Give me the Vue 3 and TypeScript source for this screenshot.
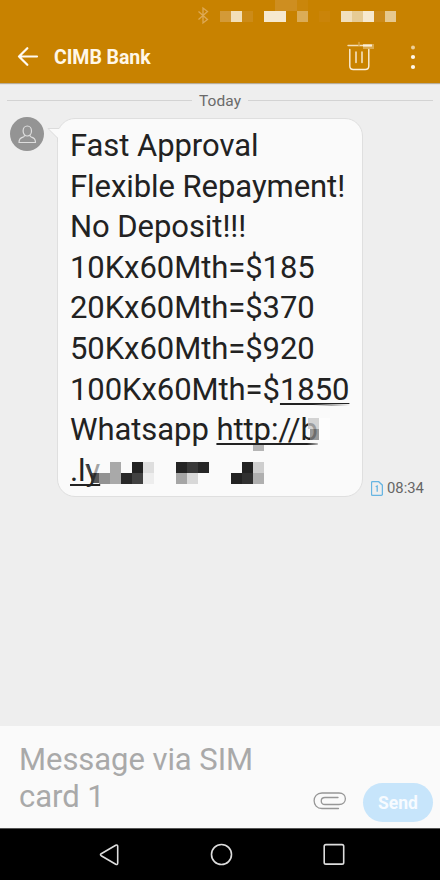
<script setup lang="ts">
interface Cell {
  x: number
  y: number
  w: number
  h: number
  c: string
}

const cell = (x: number, y: number, c: string, w = 11, h = 11): Cell => ({ x, y, w, h, c })

const statusCells: Cell[] = [
  cell(275, 0, '#ce8e20', 22),
  cell(297, 0, '#ca860b'),
  cell(220, 11, '#d39a38'),
  cell(231, 11, '#f2dfb9'),
  cell(242, 11, '#cc8b18'),
  cell(264, 11, '#f6e9d0', 22),
  cell(297, 11, '#dbac57'),
  cell(319, 11, '#ca8409'),
  cell(341, 11, '#f1dfbc'),
  cell(352, 11, '#e6cb94'),
  cell(363, 11, '#f6e9d0'),
  cell(374, 11, '#cc8a19'),
  cell(385, 11, '#e6c88e'),
]

// Coordinates are relative to the bubble's top left corner.
const bubbleCells: Cell[] = [
  cell(195, 326, '#b5b5b5', 11, 6),
  cell(41, 354, '#929292'),
  cell(52, 343, '#a9a9a9', 11, 22),
  cell(63, 354, '#282828'),
  cell(74, 343, '#222222'),
  cell(74, 354, '#414141'),
  cell(85, 343, '#dedede'),
  cell(85, 354, '#ededed'),
  cell(118, 343, '#242424'),
  cell(129, 343, '#393939'),
  cell(140, 343, '#272727'),
  cell(118, 354, '#a5a5a5'),
  cell(129, 354, '#d8d8d8'),
  cell(173, 354, '#222222'),
  cell(184, 343, '#222222'),
  cell(184, 354, '#303030'),
  cell(195, 343, '#cecece'),
  cell(195, 354, '#afafaf'),
]

const lines: string[] = [
  'Fast Approval',
  'Flexible Repayment!',
  'No Deposit!!!',
  '10Kx60Mth=$185',
  '20Kx60Mth=$370',
  '50Kx60Mth=$920',
]
</script>

<template>
  <div class="screen">
    <header class="top">
      <svg class="status" width="440" height="30" viewBox="0 0 440 30">
        <path d="M198.500 11.500l9 8-4.500 3.500V8l4.500 3.500-9 8" fill="none" stroke="#dda954" stroke-width="1.300" />
        <rect v-for="(b, i) in statusCells" :key="i" :x="b.x" :y="b.y" :width="b.w" :height="b.h" :fill="b.c" shape-rendering="crispEdges" />
      </svg>
      <div class="bar">
        <svg class="back" width="22" height="20" viewBox="0 0 22 20" fill="none" stroke="#fffaf0" stroke-width="2.200" stroke-linecap="round" stroke-linejoin="round">
          <path d="M20 9.500H2M10.300 1.200L2 9.500l8.300 8.300" />
        </svg>
        <h1>CIMB Bank</h1>
        <svg class="trash" width="30" height="32" viewBox="0 0 30 32" fill="none" stroke="#fbf0dc" stroke-width="1.400" stroke-linecap="round">
          <rect x="17" y="3" width="11" height="5" fill="#dba94e" stroke="none" />
          <path d="M2 4.500h23" stroke="#f4dfb8" />
          <path d="M17 4.500h9" stroke-width="2" stroke-linecap="butt" />
          <path d="M13 1.500v3" stroke="#dba94e" />
          <path d="M3.800 8.500v16.500q0 3.500 3.500 3.500h12q3.500 0 3.500-3.500V8.500M10 11v10.500M16 11v10.500" />
        </svg>
        <svg class="dots" width="8" height="28" viewBox="0 0 8 28" fill="#fff8ea">
          <circle cx="4" cy="4.500" r="2" fill="#edcf98" />
          <circle cx="4" cy="14" r="2.100" />
          <circle cx="4" cy="24" r="2.100" />
        </svg>
      </div>
    </header>

    <main class="thread">
      <div class="day"><span>Today</span></div>
      <div class="row">
        <svg class="avatar" width="34" height="34" viewBox="0 0 34 34">
          <circle cx="17" cy="17" r="17" fill="#949494" />
          <g fill="none" stroke="#dedede" stroke-width="1.200">
            <ellipse cx="17.300" cy="14" rx="4.200" ry="5" />
            <path d="M14.500 18.200q0 1.500-1.500 2-4 1-4 5.300h16.500q0-4.300-4-5.300-1.500-.500-1.500-2" stroke-linejoin="round" />
          </g>
        </svg>
        <div class="bubble">
          <svg class="tail" width="16" height="14" viewBox="0 0 16 14">
            <path d="M16 .500H1L11 10v4h5z" fill="#fafafa" />
            <path d="M12 .500H1L10.500 10v4" fill="none" stroke="#dcdcdc" />
          </svg>
          <p v-for="line in lines" :key="line">{{ line }}</p>
          <p>100Kx60Mth=$<span class="link">1850</span></p>
          <p>Whatsapp <span class="link">http://b</span></p>
          <p><span class="link">.ly</span></p>
          <svg class="mosaic" width="304" height="378" viewBox="0 0 304 378">
            <defs>
              <linearGradient id="smear" x1="0" x2="1">
                <stop offset="0" stop-color="#a8a8a8" stop-opacity="0" />
                <stop offset=".5" stop-color="#a8a8a8" />
                <stop offset="1" stop-color="#fafafa" />
              </linearGradient>
              <linearGradient id="fade" x1="0" x2="1">
                <stop offset="0" stop-color="#fafafa" stop-opacity="0" />
                <stop offset="1" stop-color="#fafafa" />
              </linearGradient>
            </defs>
            <rect x="250" y="299" width="11" height="11" fill="#c6c6c6" opacity=".75" />
            <rect x="252" y="310" width="9" height="11" fill="#818181" opacity=".8" />
            <rect x="249" y="322" width="16" height="4" fill="url(#fade)" />
            <rect x="261" y="299" width="11" height="22" fill="#fdfdfd" />
            <rect x="255" y="285" width="37" height="2" fill="url(#smear)" />
            <path d="M29 340h13v14h-6z" fill="#fafafa" opacity=".6" />
            <path d="M27 345l4 1 3 10-3-2z" fill="#555555" opacity=".6" />
            <path d="M34 354h7v10h-8z" fill="#303030" opacity=".8" />
            <rect v-for="(b, i) in bubbleCells" :key="i" :x="b.x" :y="b.y" :width="b.w" :height="b.h" :fill="b.c" shape-rendering="crispEdges" />
          </svg>
        </div>
        <div class="stamp">
          <svg width="12" height="15" viewBox="0 0 12 15" fill="none" stroke="#67b5e2" stroke-width="1.300">
            <path d="M1.500.700h6.200l3.700 3.500v9.100q0 1-1 1h-8.900q-1 0-1-1V1.700q0-1 1-1z" />
            <path d="M4.700 5.800l1.500-.800v5.700" />
          </svg>
          <time>08:34</time>
        </div>
      </div>
    </main>

    <footer class="compose">
      <div class="hint">Message via SIM card 1</div>
      <svg class="clip" width="34" height="18" viewBox="0 0 34 18" fill="none" stroke="#979797" stroke-width="1.300" stroke-linecap="round">
        <path d="M25.500 16.500H9C-1.500 16.500-1.500 1 9 1h17c8.500 0 8.500 11.500 0 11.500H12c-5 0-5-7 0-7h13" />
      </svg>
      <button class="send" type="button">Send</button>
    </footer>

    <nav class="keys">
      <svg width="440" height="51" viewBox="0 0 440 51" fill="none" stroke="#dddddd" stroke-width="1.600" stroke-linejoin="round">
        <path d="M115.700 16.300q2-1 2 1.200v16.500q0 2.200-2 1.200L101.200 26.700q-1.400-1 0-2z" />
        <circle cx="221.500" cy="25.500" r="10" />
        <rect x="324.200" y="15.600" width="19.500" height="19.500" rx="1.700" />
      </svg>
    </nav>
  </div>
</template>

<style>
body {
  margin: 0;
}
</style>

<style scoped>
.screen {
  width: 440px;
  height: 880px;
  display: flex;
  flex-direction: column;
  overflow: hidden;
  background: #eeeeee;
  font-family: Roboto, "Liberation Sans", sans-serif;
}
.top {
  height: 83px;
  background: #c88200;
  box-shadow: 0 1px 1px #b9ad98;
  flex: none;
}
.status {
  display: block;
}
.bar {
  height: 53px;
  display: flex;
  align-items: center;
  padding-left: 17px;
}
.bar h1 {
  margin: 2px 0 0 15px;
  width: 292px;
  font-size: 19.5px;
  letter-spacing: -0.05px;
  line-height: 24px;
  font-weight: 700;
  color: #fff7e8;
}
.dots {
  margin-left: 33px;
}
.thread {
  flex: 1;
}
.day {
  display: flex;
  align-items: center;
  gap: 7px;
  height: 35px;
  padding: 0 7px;
  font-size: 15.5px;
  letter-spacing: 0.1px;
  color: #6a6a6a;
}
.day::before,
.day::after {
  content: "";
  flex: 1;
  height: 1px;
  background: #d3d3d3;
}
.row {
  display: flex;
  align-items: flex-start;
  padding-left: 10px;
}
.avatar {
  margin-top: -1px;
}
.bubble {
  position: relative;
  box-sizing: border-box;
  width: 306px;
  height: 379px;
  margin-left: 13px;
  padding: 7px 0 0 12px;
  background: #fafafa;
  border: 1px solid #dfdfdf;
  border-radius: 18px;
}
.bubble p {
  margin: 0;
  height: 40.6px;
  line-height: 40.6px;
  font-size: 31px;
  letter-spacing: -0.06px;
  color: #222222;
  white-space: nowrap;
}
.link {
  text-decoration: underline;
  text-decoration-thickness: 1.5px;
  text-underline-offset: 2.5px;
  text-decoration-skip-ink: none;
}
.tail {
  position: absolute;
  left: -11px;
  top: 9px;
}
.mosaic {
  position: absolute;
  left: 0;
  top: 0;
}
.stamp {
  display: flex;
  align-items: center;
  gap: 4px;
  align-self: flex-end;
  margin-left: 8px;
  font-size: 14.8px;
  line-height: 18px;
  color: #666666;
}
.compose {
  height: 102px;
  flex: none;
  display: flex;
  align-items: flex-start;
  background: #fafafa;
}
.hint {
  width: 250px;
  margin: 16px 0 0 19px;
  font-size: 31px;
  letter-spacing: -0.06px;
  line-height: 36.5px;
  color: #a9a9a9;
}
.clip {
  margin: 66px 0 0 44px;
}
.send {
  margin: 57px 0 0 16px;
  width: 70px;
  height: 39px;
  padding: 0;
  border: 0;
  border-radius: 20px;
  background: #c7e5fb;
  color: #f7fbff;
  font: 700 17.5px/38px Roboto, "Liberation Sans", sans-serif;
}
.keys {
  height: 52px;
  flex: none;
  box-sizing: border-box;
  border-top: 1px solid #555555;
  background: #000000;
}
.keys svg {
  display: block;
}
</style>
